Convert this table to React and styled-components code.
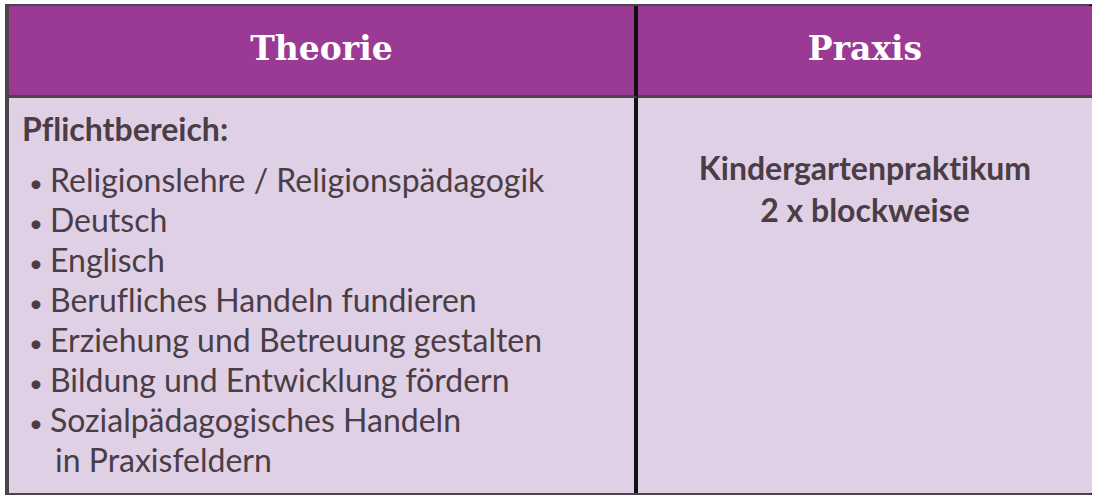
import React from "react";
import styled, { createGlobalStyle } from "styled-components";

const GlobalStyle = createGlobalStyle`
  html, body {
    margin: 0;
    padding: 0;
    background: #ffffff;
  }
`;

const subjects = [
  "Religionslehre / Religionspädagogik",
  "Deutsch",
  "Englisch",
  "Berufliches Handeln fundieren",
  "Erziehung und Betreuung gestalten",
  "Bildung und Entwicklung fördern",
  ["Sozialpädagogisches Handeln", "in Praxisfeldern"],
];

export default function App() {
  return (
    <Page>
      <GlobalStyle />
      <Table>
        <HeadCell>Theorie</HeadCell>
        <HeadCell last>Praxis</HeadCell>
        <BodyCell>
          <Heading>Pflichtbereich:</Heading>
          <List>
            {subjects.map((item) =>
              Array.isArray(item) ? (
                <Item key={item[0]}>
                  <Bullet>•</Bullet>
                  <span>
                    {item[0]}
                    <Wrap>{item[1]}</Wrap>
                  </span>
                </Item>
              ) : (
                <Item key={item}>
                  <Bullet>•</Bullet>
                  <span>{item}</span>
                </Item>
              )
            )}
          </List>
        </BodyCell>
        <BodyCell last centered>
          <Practice>
            Kindergartenpraktikum
            <br />2 x blockweise
          </Practice>
        </BodyCell>
      </Table>
    </Page>
  );
}

const Page = styled.div`
  padding: 4px 0 0 5px;
  width: 1097px;
  height: 498px;
  box-sizing: border-box;
`;

const Table = styled.div`
  display: grid;
  grid-template-columns: 629px 454px;
  grid-template-rows: 92px 395px;
  width: 1087px;
  height: 491px;
  box-sizing: border-box;
  border-top: 2px solid #4b4449;
  border-left: 4px solid #4b4449;
  border-right: 4px solid #111;
  border-bottom: 5px solid #4b4449;
`;

const HeadCell = styled.div`
  background: #9b3a94;
  color: #ffffff;
  display: flex;
  align-items: center;
  justify-content: center;
  font-family: "DejaVu Serif", "Liberation Serif", serif;
  font-weight: bold;
  font-size: 33px;
  border-bottom: 3px solid #4b4449;
  border-right: ${(p) => (p.last ? "0" : "4px solid #111")};
  padding-bottom: 4px;
  box-sizing: border-box;
`;

const BodyCell = styled.div`
  background: #dfd0e6;
  color: #4a3d45;
  font-family: Lato, "Noto Sans", sans-serif;
  font-variant-ligatures: none;
  border-right: ${(p) => (p.last ? "0" : "4px solid #111")};
  padding: ${(p) => (p.centered ? "49px 0 0" : "15px 0 0 13px")};
  text-align: ${(p) => (p.centered ? "center" : "left")};
  box-sizing: border-box;
`;

const Heading = styled.div`
  font-weight: bold;
  font-size: 32px;
  line-height: 32px;
  margin-bottom: 15px;
`;

const List = styled.ul`
  list-style: none;
  margin: 0;
  padding: 0 0 0 7px;
`;

const Item = styled.li`
  display: flex;
  align-items: baseline;
  font-size: 32px;
  line-height: 40px;
`;

const Bullet = styled.span`
  width: 21px;
  flex: none;
  font-size: 24px;
  line-height: 1;
`;

const Wrap = styled.span`
  display: block;
  padding-left: 5px;
`;

const Practice = styled.div`
  font-weight: bold;
  font-size: 32px;
  line-height: 42px;
`;
